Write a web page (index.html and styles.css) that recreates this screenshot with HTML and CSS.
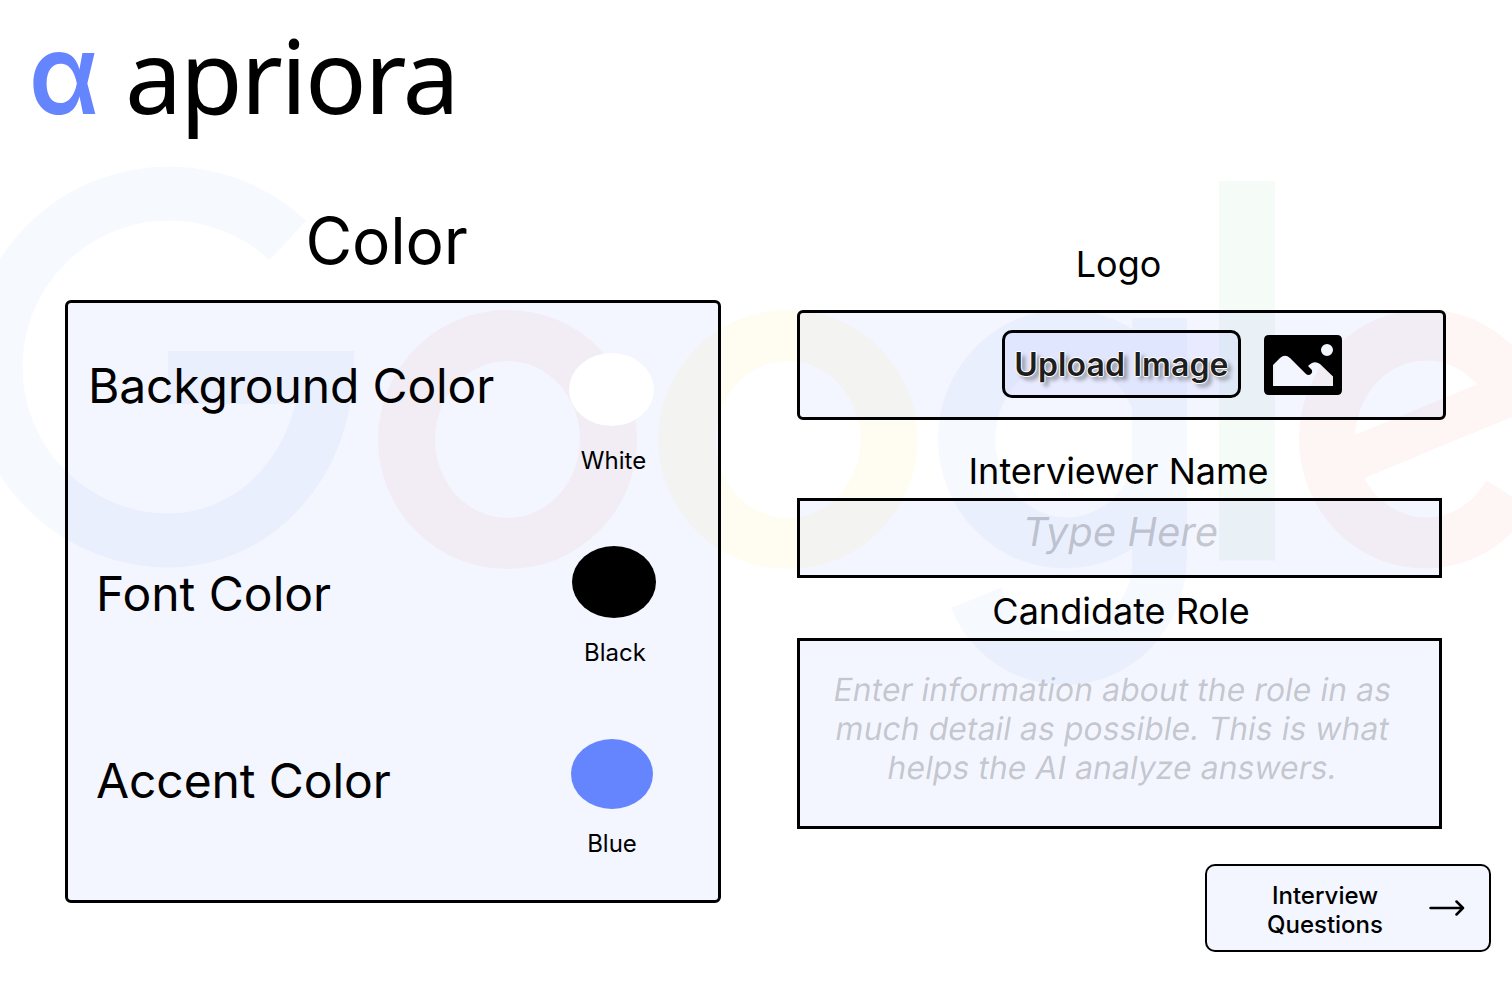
FILE: index.html
```html
<!DOCTYPE html>
<html lang="en">
<head>
<meta charset="utf-8">
<title>Apriora</title>
<link rel="stylesheet" href="styles.css">
</head>
<body>
<div class="page">
  <svg class="watermark" viewBox="0 0 1512 982" aria-hidden="true">
    <defs>
      <mask id="ring-left"><circle cx="507.500" cy="439.500" r="129.500" fill="#fff"/><ellipse cx="507.500" cy="439.500" rx="72.500" ry="78.500" fill="#000"/></mask>
      <mask id="ring-right"><circle cx="788" cy="439.500" r="129.500" fill="#fff"/><ellipse cx="788" cy="439.500" rx="72.500" ry="78.500" fill="#000"/></mask>
      <mask id="bowl"><ellipse cx="1065" cy="439" rx="127" ry="129.500" fill="#fff"/><ellipse cx="1066.500" cy="439" rx="71" ry="78.500" fill="#000"/></mask>
      <mask id="wheel">
        <ellipse cx="1425" cy="439" rx="126" ry="129.500" fill="#fff"/>
        <ellipse cx="1426" cy="439" rx="71" ry="78.500" fill="#000"/>
        <line x1="1340" y1="464.600" x2="1560" y2="373.700" stroke="#fff" stroke-width="43.400"/>
        <polygon points="1420,455 1560,397 1560,528 1491,483" fill="#000"/>
      </mask>
    </defs>
    <g class="wm-blue" fill="none" stroke="currentColor">
      <circle cx="169" cy="367" r="173.500" stroke-width="54" pathLength="360" stroke-dasharray="223.200 400" stroke-dashoffset="-90"/>
      <ellipse cx="169" cy="367" rx="157.500" ry="173.500" stroke-width="54" pathLength="360" stroke-dasharray="90.300 400"/>
      <rect x="168" y="351" width="186" height="53" fill="currentColor" stroke="none"/>
    </g>
    <rect class="wm-red" x="370" y="300" width="280" height="280" fill="currentColor" mask="url(#ring-left)"/>
    <rect class="wm-yellow" x="650" y="300" width="280" height="280" fill="currentColor" mask="url(#ring-right)"/>
    <g class="wm-blue">
      <rect x="930" y="300" width="257" height="280" fill="currentColor" mask="url(#bowl)"/>
      <rect x="1132" y="318" width="55" height="243" fill="currentColor"/>
      <ellipse cx="1064" cy="560" rx="95.500" ry="98" fill="none" stroke="currentColor" stroke-width="54" pathLength="360" stroke-dasharray="157 400"/>
    </g>
    <rect class="wm-green" x="1219" y="181" width="56" height="379.500" fill="currentColor"/>
    <rect class="wm-red" x="1290" y="300" width="222" height="280" fill="currentColor" mask="url(#wheel)"/>
  </svg>

  <header class="brand">
    <span class="brand-mark">α</span>
    <span class="brand-name">apriora</span>
  </header>

  <main class="columns">
    <section class="colors">
      <h1 class="colors-title">Color</h1>
      <div class="panel">
        <div class="color-row">
          <span class="color-label label-background">Background Color</span>
          <div class="choice choice-white"><span class="swatch swatch-white"></span><span class="swatch-name">White</span></div>
        </div>
        <div class="color-row">
          <span class="color-label label-font">Font Color</span>
          <div class="choice choice-black"><span class="swatch swatch-black"></span><span class="swatch-name">Black</span></div>
        </div>
        <div class="color-row">
          <span class="color-label label-accent">Accent Color</span>
          <div class="choice choice-blue"><span class="swatch swatch-blue"></span><span class="swatch-name">Blue</span></div>
        </div>
      </div>
    </section>

    <section class="details">
      <h2 class="field-title title-logo">Logo</h2>
      <div class="logo-box">
        <button class="upload">Upload Image</button>
        <svg class="image-icon" viewBox="0 0 78 60" aria-hidden="true">
          <path fill-rule="evenodd" d="M5 0H73Q78 0 78 5V55Q78 60 73 60H5Q0 60 0 55V5Q0 0 5 0ZM57 15a6 6 0 1 0 12 0a6 6 0 1 0-12 0ZM9 51V30L16 23Q21 18.500 26 23L42 39Q44.500 41 47 39Q49 37 47.500 34.500L44 31Q50 24.500 56 29L69 41.500V51Z"/>
        </svg>
      </div>
      <h2 class="field-title title-name">Interviewer Name</h2>
      <div class="input input-name"><span class="slanted">Type Here</span></div>
      <h2 class="field-title title-role">Candidate Role</h2>
      <div class="input input-role">
        <span class="slanted">Enter information about the role in as</span>
        <span class="slanted">much detail as possible. This is what</span>
        <span class="slanted">helps the AI analyze answers.</span>
      </div>
      <button class="next">
        <span class="next-text">Interview<br>Questions</span>
        <svg class="arrow" viewBox="0 0 36 16" aria-hidden="true"><path d="M1.500 8H34M27.500 1.500L34 8L27.500 14.500"/></svg>
      </button>
    </section>
  </main>
</div>
</body>
</html>
```
FILE: styles.css
```css
* { box-sizing: border-box; }
body { margin: 0; background: #fff; color: #000; font-family: Inter, "Liberation Sans", sans-serif; }
h1, h2 { margin: 0; font-weight: 400; }
button { margin: 0; padding: 0; font-family: inherit; color: inherit; }

.page { position: relative; width: 1512px; height: 982px; overflow: hidden; }
.watermark { position: absolute; inset: 0; width: 1512px; height: 982px; }
.wm-blue { color: #f6f9fe; }
.wm-red { color: #fef6f4; }
.wm-yellow { color: #fffdf1; }
.wm-green { color: #f5fbf7; }

.brand { position: relative; display: flex; align-items: baseline; height: 190px; padding: 8px 0 0 29px; line-height: 130px; }
.brand-mark { width: 96px; font-size: 112px; font-weight: 600; color: #6585ff; transform: scaleX(.91); transform-origin: 0 50%; }
.brand-name { font-family: "Noto Sans", sans-serif; font-size: 102px; letter-spacing: -2.1px; }

.columns { position: relative; display: flex; gap: 76px; padding-left: 65px; }

.colors { width: 656px; padding-top: 12px; }
.colors-title { height: 98px; padding-right: 13px; font-size: 64px; line-height: 78px; letter-spacing: -.2px; text-align: center; }
.panel { height: 603px; padding: 50px 0 0 20px; border: 3px solid #000; border-radius: 6px; background: rgba(101, 133, 255, .08); }
.color-row { display: flex; height: 193px; }
.color-label { flex: none; width: 476px; font-size: 48px; line-height: 58px; letter-spacing: -.1px; }
.label-background { padding-top: 4px; letter-spacing: -.15px; }
.label-font { padding: 19px 0 0 8px; letter-spacing: 0; }
.label-accent { padding: 13px 0 0 8px; }
.choice { display: flex; flex-direction: column; align-items: center; gap: 20px; width: 100px; }
.choice-white { margin-left: -3px; }
.choice-blue { margin-left: -2px; }
.swatch { border-radius: 50%; }
.swatch-white { width: 85px; height: 73px; background: #fff; }
.swatch-black { width: 84px; height: 72px; background: #000; }
.swatch-blue { width: 82px; height: 70px; background: #6585ff; }
.swatch-name { font-size: 24px; line-height: 29px; }
.choice-white .swatch-name { padding-left: 5px; }
.choice-black .swatch-name { padding-left: 2px; }

.details { display: flex; flex-direction: column; width: 694px; padding-top: 52px; }
.field-title { width: 645px; font-size: 36px; line-height: 44px; text-align: center; }
.title-logo { height: 68px; padding-right: 2px; }
.title-name { height: 49px; margin-top: 29px; padding-right: 2px; }
.title-role { height: 49px; margin-top: 11px; padding-left: 3px; }
.logo-box { display: flex; gap: 23px; width: 649px; height: 110px; padding: 17px 0 0 202px; border: 3px solid #000; border-radius: 6px; background: rgba(101, 133, 255, .08); }
.upload { width: 239px; height: 68px; border: 3px solid #000; border-radius: 10px; background: rgba(101, 115, 255, .07); color: #1e1e1e; font-size: 32px; font-weight: 600; line-height: 39px; letter-spacing: .1px; white-space: nowrap; text-shadow: 0 0 1px #fff, 1px 0 0 #fff, -1px 0 0 #fff, 0 1px 0 #fff, 0 -1px 0 #fff, 4px 4px 4px rgba(0, 0, 0, .4); }
.image-icon { width: 78px; height: 60px; margin-top: 5px; }
.input { display: flex; flex-direction: column; align-items: center; width: 645px; border: 3px solid #000; background: rgba(101, 133, 255, .08); color: rgba(0, 0, 0, .2); }
.slanted { transform: skewX(-9.4deg); white-space: nowrap; }
.input-name { height: 80px; padding: 7px 0 0 2px; font-size: 40px; line-height: 48px; }
.input-role { height: 191px; padding: 29px 13px 0 0; font-size: 32px; line-height: 39px; }
.next { display: flex; align-items: center; align-self: flex-end; gap: 46px; width: 286px; height: 88px; margin-top: 35px; padding: 4px 0 0 60px; border: 2px solid #000; border-radius: 10px; background: #f3f6ff; }
.next-text { font-size: 24px; font-weight: 500; line-height: 29px; text-align: center; }
.arrow { width: 36px; height: 16px; margin-top: -5px; fill: none; stroke: #000; stroke-width: 2.500; stroke-linecap: round; stroke-linejoin: round; }
```
